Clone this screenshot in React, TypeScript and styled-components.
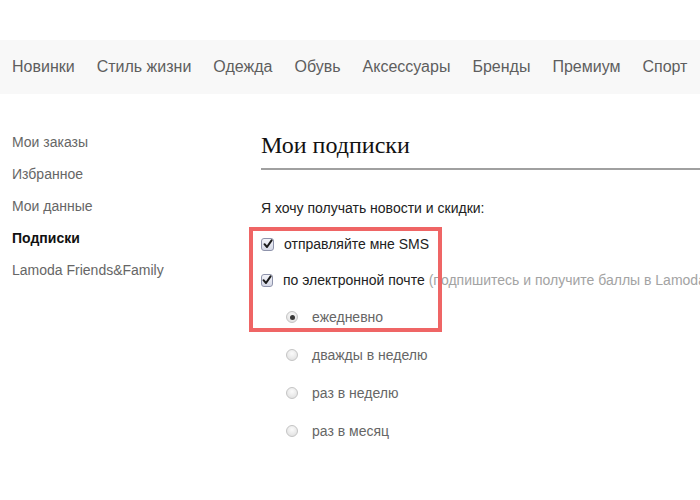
import styled, { createGlobalStyle } from 'styled-components';

const GlobalStyle = createGlobalStyle`
	html, body {
		margin: 0;
		padding: 0;
		background: #fff;
	}
	body {
		font-family: 'Liberation Sans', Arial, sans-serif;
	}
`;

const Page = styled.div`
	width: 700px;
	height: 500px;
	overflow: hidden;
	padding-top: 40px;
	box-sizing: border-box;
`;

const NavBar = styled.nav`
	display: flex;
	align-items: center;
	gap: 22px;
	height: 54px;
	padding-left: 12px;
	background: #f8f8f8;
	white-space: nowrap;

	a {
		font-size: 16px;
		color: #5e5e5e;
		text-decoration: none;
	}
`;

const Main = styled.div`
	display: flex;
`;

const Sidebar = styled.ul`
	list-style: none;
	margin: 0;
	padding: 32px 0 0 12px;
	width: 249px;
	flex-shrink: 0;
`;

const SideItem = styled.li<{ $active?: boolean }>`
	font-size: 14px;
	line-height: 32px;
	color: ${(p) => (p.$active ? '#111' : '#666')};
	font-weight: ${(p) => (p.$active ? 'bold' : 'normal')};
`;

const Content = styled.section`
	flex: 1;
	min-width: 0;
	padding-top: 36px;
	white-space: nowrap;
`;

const Title = styled.h1`
	margin: 0;
	padding-bottom: 8px;
	border-bottom: 2px solid #a0a0a0;
	font-family: 'Liberation Serif', 'Times New Roman', serif;
	font-weight: normal;
	font-size: 24px;
	line-height: 30px;
	color: #111;
`;

const Intro = styled.p`
	margin: 28px 0 8px;
	font-size: 14px;
	line-height: 20px;
	color: #222;
`;

const Highlight = styled.div`
	position: relative;

	&::after {
		content: '';
		position: absolute;
		top: 1px;
		left: -12px;
		width: 193px;
		height: 105px;
		border: 4px solid #ef6565;
		box-sizing: border-box;
		pointer-events: none;
	}
`;

const CheckRow = styled.label`
	display: flex;
	align-items: center;
	gap: 10px;
	height: 36px;
	font-size: 14px;
	color: #222;
`;

const Box = styled.span`
	display: inline-flex;
	align-items: center;
	justify-content: center;
	width: 13px;
	height: 13px;
	box-sizing: border-box;
	border: 1px solid #8e93ab;
	border-radius: 3px;
	background: linear-gradient(#f4f5fa, #d5d8e6);
`;

const Note = styled.span`
	color: #a3a3a3;
	margin-left: 4px;
`;

const RadioRow = styled.label`
	display: flex;
	align-items: center;
	gap: 14px;
	height: 38px;
	padding-left: 25px;
	font-size: 14px;
	color: #666;
`;

const Dot = styled.span<{ $checked?: boolean }>`
	position: relative;
	width: 12px;
	height: 12px;
	box-sizing: border-box;
	border: 1px solid #c4c4c4;
	border-radius: 50%;
	background: radial-gradient(circle at 50% 35%, #fbfbfb, #dcdcdc);

	&::after {
		content: '';
		display: ${(p) => (p.$checked ? 'block' : 'none')};
		position: absolute;
		top: 50%;
		left: 50%;
		width: 5px;
		height: 5px;
		margin: -2.5px 0 0 -2.5px;
		border-radius: 50%;
		background: #3a3a3a;
	}
`;

const Check = () => (
	<Box>
		<svg width='10' height='10' viewBox='0 0 10 10'>
			<path d='M1.5 5.2 L4 8 L8.6 1.4' fill='none' stroke='#1c1c1c' strokeWidth='2' strokeLinecap='round' strokeLinejoin='round' />
		</svg>
	</Box>
);

const navItems = ['Новинки', 'Стиль жизни', 'Одежда', 'Обувь', 'Аксессуары', 'Бренды', 'Премиум', 'Спорт'];
const sideItems = ['Мои заказы', 'Избранное', 'Мои данные', 'Подписки', 'Lamoda Friends&Family'];
const frequency = ['дважды в неделю', 'раз в неделю', 'раз в месяц'];

export default function App() {
	return (
		<>
			<GlobalStyle />
			<Page>
				<NavBar>
					{navItems.map((n) => (
						<a key={n} href='#'>
							{n}
						</a>
					))}
				</NavBar>
				<Main>
					<Sidebar>
						{sideItems.map((s) => (
							<SideItem key={s} $active={s === 'Подписки'}>
								{s}
							</SideItem>
						))}
					</Sidebar>
					<Content>
						<Title>Мои подписки</Title>
						<Intro>Я хочу получать новости и скидки:</Intro>
						<Highlight>
							<CheckRow>
								<Check />
								отправляйте мне SMS
							</CheckRow>
							<CheckRow>
								<Check />
								<span>
									по электронной почте
									<Note>(подпишитесь и получите баллы в Lamoda Friends&amp;Family)</Note>
								</span>
							</CheckRow>
							<RadioRow>
								<Dot $checked />
								ежедневно
							</RadioRow>
						</Highlight>
						{frequency.map((f) => (
							<RadioRow key={f}>
								<Dot />
								{f}
							</RadioRow>
						))}
					</Content>
				</Main>
			</Page>
		</>
	);
}
